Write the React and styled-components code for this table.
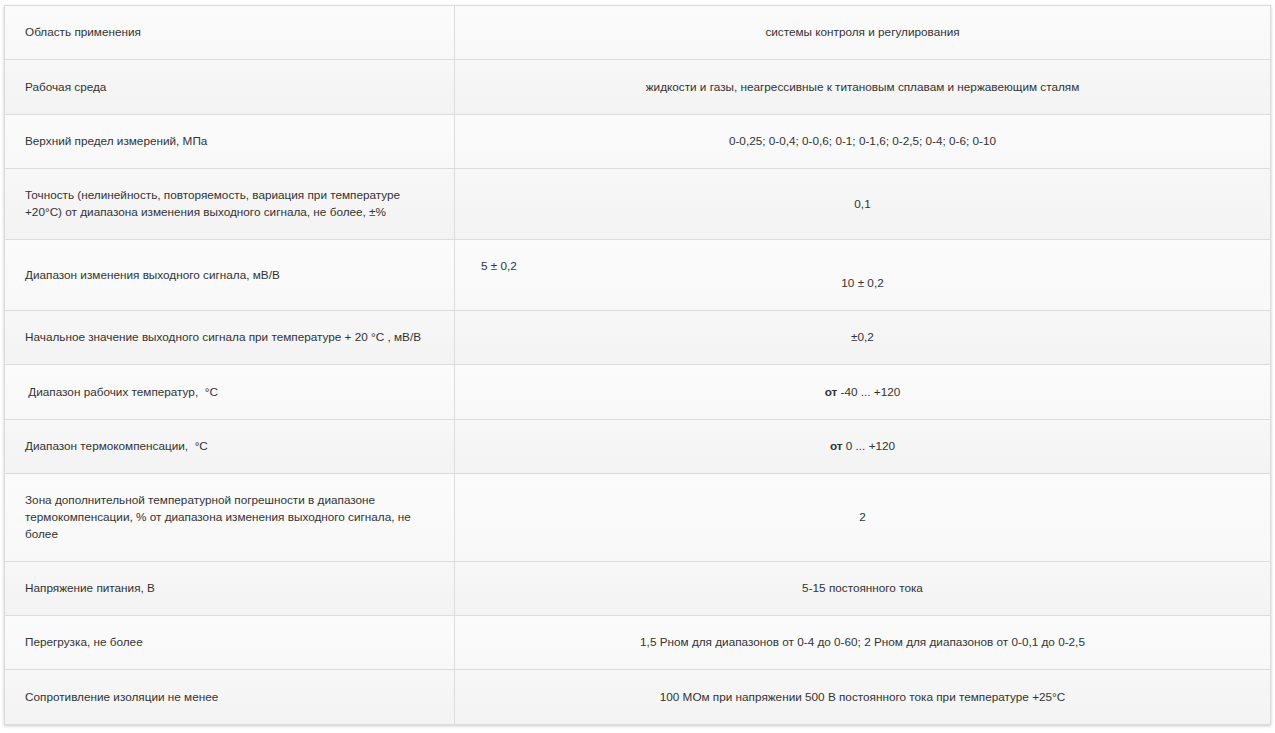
import React from 'react';
import styled, { createGlobalStyle } from 'styled-components';

const GlobalStyle = createGlobalStyle`
  html, body {
    margin: 0;
    padding: 0;
    background: #fff;
  }
`;

const rows = [
  { label: 'Область применения', value: 'системы контроля и регулирования' },
  {
    label: 'Рабочая среда',
    value: 'жидкости и газы, неагрессивные к титановым сплавам и нержавеющим сталям',
  },
  {
    label: 'Верхний предел измерений, МПа',
    value: '0-0,25; 0-0,4; 0-0,6; 0-1; 0-1,6; 0-2,5; 0-4; 0-6; 0-10',
  },
  {
    label:
      'Точность (нелинейность, повторяемость, вариация при температуре +20°С) от диапазона изменения выходного сигнала, не более, ±%',
    value: '0,1',
  },
  { label: 'Диапазон изменения выходного сигнала, мВ/В', split: ['5 ± 0,2', '10 ± 0,2'] },
  {
    label: 'Начальное значение выходного сигнала при температуре + 20 °С , мВ/В',
    value: '±0,2',
  },
  { label: '\u00a0Диапазон рабочих температур, \u00a0°С', prefix: 'от', value: ' -40 ... +120' },
  { label: 'Диапазон термокомпенсации, \u00a0°С', prefix: 'от', value: ' 0 ... +120' },
  {
    label:
      'Зона дополнительной температурной погрешности в диапазоне термокомпенсации, % от диапазона изменения выходного сигнала, не более',
    value: '2',
  },
  { label: 'Напряжение питания, В', value: '5-15 постоянного тока' },
  {
    label: 'Перегрузка, не более',
    value: '1,5 Рном для диапазонов от 0-4 до 0-60; 2 Рном для диапазонов от 0-0,1 до 0-2,5',
  },
  {
    label: 'Сопротивление изоляции не менее',
    value: '100 МОм при напряжении 500 В постоянного тока при температуре +25°С',
  },
];

const App = () => {
  return (
    <Page>
      <GlobalStyle />
      <Table>
        <tbody>
          {rows.map((row, i) => (
            <Row key={i} $even={i % 2 === 1}>
              <Label>{row.label}</Label>
              <Value>
                {row.split ? (
                  <>
                    <SideLine>{row.split[0]}</SideLine>
                    <div>{row.split[1]}</div>
                  </>
                ) : (
                  <>
                    {row.prefix && <b>{row.prefix}</b>}
                    {row.value}
                  </>
                )}
              </Value>
            </Row>
          ))}
        </tbody>
      </Table>
    </Page>
  );
};

export default App;

const Page = styled.div`
  padding: 5px 4px 8px 4px;
  font-family: 'Liberation Sans', Arial, sans-serif;
`;

const Table = styled.table`
  width: 100%;
  border-collapse: collapse;
  box-shadow: 0 1px 3px rgba(0, 0, 0, 0.22);
  font-size: 11.75px;
  line-height: 16.8px;
  color: #333;
`;

const Row = styled.tr`
  background: ${(p) =>
    p.$even
      ? 'linear-gradient(to bottom, #f7f7f7, #f3f3f3)'
      : 'linear-gradient(to bottom, #fbfbfb, #f8f8f8)'};

  td {
    border: 1px solid #dcdcdc;
    padding: 18.25px 20px;
    vertical-align: middle;
  }
`;

const Label = styled.td`
  width: 409px;
  text-align: left;
`;

const Value = styled.td`
  text-align: center;

  b {
    font-weight: bold;
  }
`;

const SideLine = styled.div`
  text-align: left;
  padding-left: 6px;
`;
